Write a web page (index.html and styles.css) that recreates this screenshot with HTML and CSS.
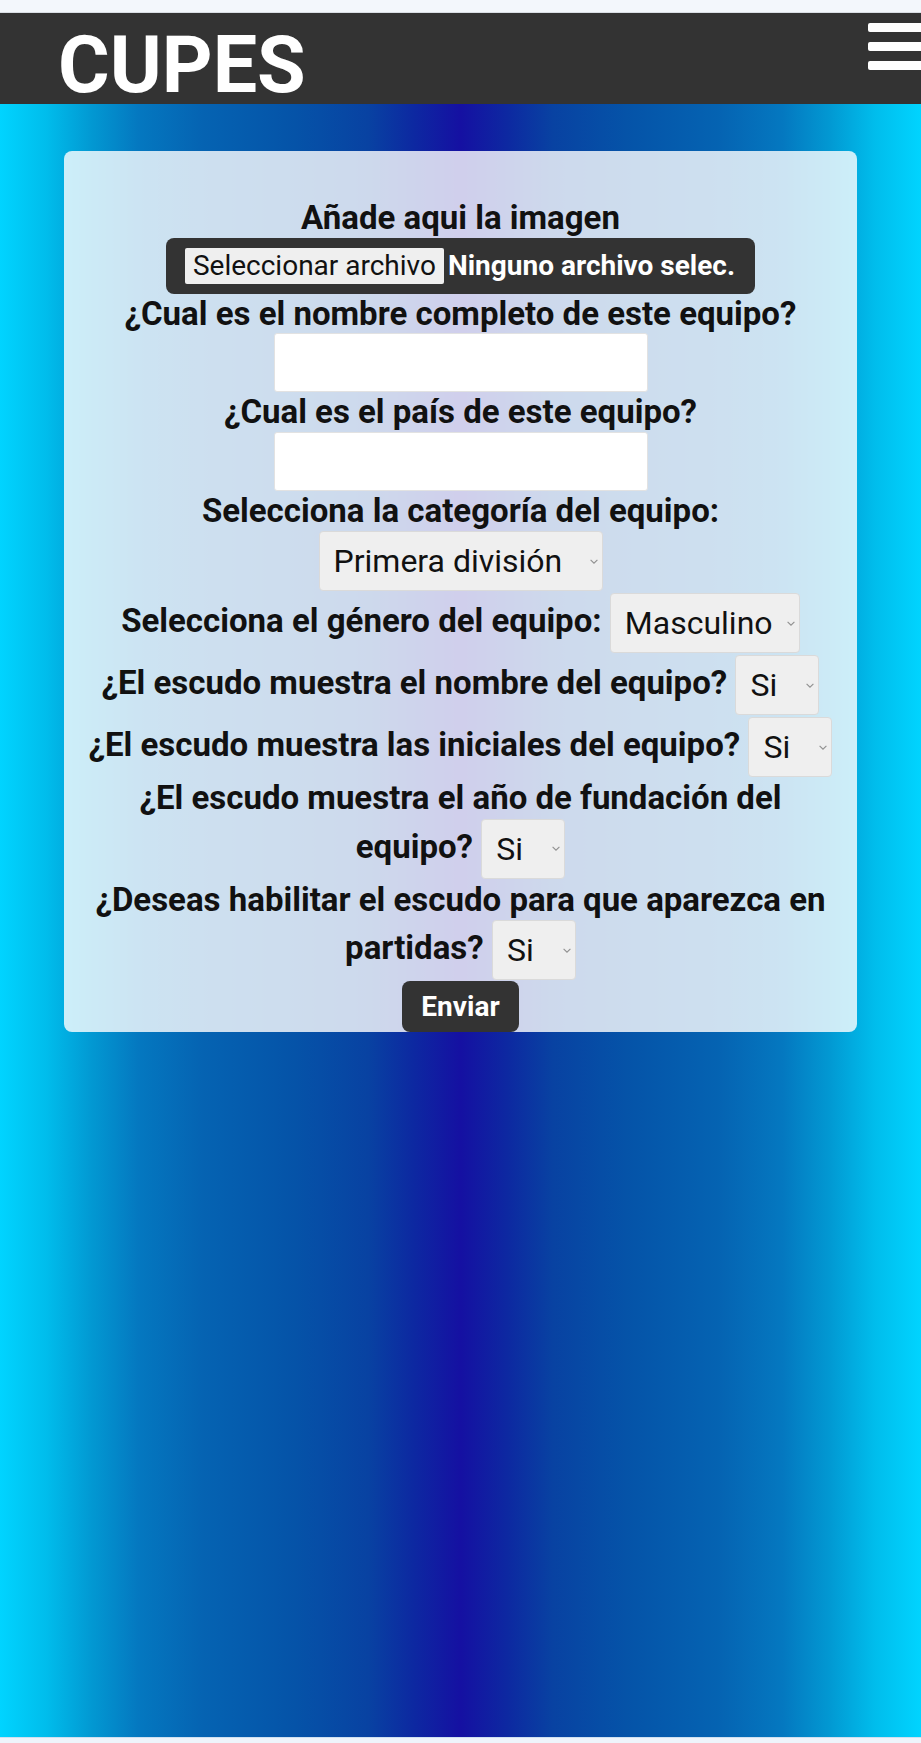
FILE: index.html
```html
<!DOCTYPE html>
<html lang="es">
<head>
<meta charset="utf-8">
<title>CUPES</title>
<link rel="stylesheet" href="styles.css">
</head>
<body>
<div class="statusbar"></div>
<header class="topbar">
  <h1 class="brand">CUPES</h1>
  <div class="burger" aria-label="Menú">
    <span class="burger-bar"></span>
    <span class="burger-bar"></span>
    <span class="burger-bar"></span>
  </div>
</header>
<main class="stage">
  <form class="card">
    <p class="q">Añade aqui la imagen</p>
    <label class="file">
      <input type="file" class="file-input" accept="image/*">
      <span class="file-btn">Seleccionar archivo</span>
      <span class="file-name">Ninguno archivo selec.</span>
    </label>
    <p class="q">¿Cual es el nombre completo de este equipo?</p>
    <input type="text" class="text-input">
    <p class="q">¿Cual es el país de este equipo?</p>
    <input type="text" class="text-input">
    <p class="q">Selecciona la categoría del equipo:</p>
    <p class="q"><select class="pick"><option>Primera división</option><option>Segunda división</option><option>Tercera división</option></select></p>
    <p class="q">Selecciona el género del equipo: <select class="pick"><option>Masculino</option><option>Femenino</option></select></p>
    <p class="q">¿El escudo muestra el nombre del equipo? <select class="pick"><option>Si</option><option>No</option></select></p>
    <p class="q">¿El escudo muestra las iniciales del equipo? <select class="pick"><option>Si</option><option>No</option></select></p>
    <p class="q">¿El escudo muestra el año de fundación del equipo? <select class="pick"><option>Si</option><option>No</option></select></p>
    <p class="q">¿Deseas habilitar el escudo para que aparezca en partidas? <select class="pick"><option>Si</option><option>No</option></select></p>
    <button type="submit" class="send">Enviar</button>
  </form>
</main>
<div class="navbar"></div>
</body>
</html>
```
FILE: styles.css
```css
* { box-sizing: border-box; }

html, body {
  margin: 0;
  padding: 0;
}

body {
  background: #f3f7fc;
  font-family: "Roboto", "Liberation Sans", sans-serif;
  color: #111;
}

.statusbar {
  height: 13px;
  background: #f3f7fc;
  border-bottom: 1px solid #d9dee4;
}

.topbar {
  height: 91px;
  background: #333333;
  display: flex;
  align-items: flex-start;
  padding-left: 58px;
}

.brand {
  margin: 14px 0 0;
  font-size: 79px;
  line-height: 76px;
  font-weight: 700;
  color: #ffffff;
}

.burger {
  margin-left: auto;
  margin-top: 10px;
  width: 53px;
  display: flex;
  flex-direction: column;
  gap: 10px;
}

.burger-bar {
  display: block;
  height: 9px;
  background: #ffffff;
  border-radius: 2px 0 0 2px;
}

.stage {
  height: 1633px;
  padding-top: 47px;
  background: linear-gradient(90deg,
    #00d4ff 0%,
    #00bdec 5%,
    #0298d2 10%,
    #0478c0 15%,
    #0563b2 22%,
    #0553a8 32%,
    #0842a2 40%,
    #0d28a1 45%,
    #1510a2 50%,
    #0d28a1 55%,
    #0842a2 60%,
    #0553a8 68%,
    #0563b2 78%,
    #0478c0 85%,
    #0298d2 90%,
    #00bdec 95%,
    #00d4ff 100%);
}

.card {
  margin: 0 64px;
  padding: 47px 20px 0;
  background: rgba(255, 255, 255, 0.8);
  border-radius: 8px;
  display: flex;
  flex-direction: column;
  align-items: center;
}

.q {
  align-self: stretch;
  margin: 0;
  text-align: center;
  font-size: 33px;
  line-height: 39.5px;
  font-weight: 700;
  color: #111;
}

.file {
  display: inline-flex;
  align-items: center;
  gap: 4px;
  height: 56px;
  padding: 0 20px 0 19px;
  background: #333333;
  border-radius: 8px;
  cursor: pointer;
}

.file-input {
  display: none;
}

.file-btn {
  height: 36px;
  padding: 0 8px;
  background: #efefef;
  border-radius: 2px;
  font-size: 28px;
  line-height: 36px;
  font-weight: 400;
  color: #111;
}

.file-name {
  font-size: 28px;
  font-weight: 700;
  color: #ffffff;
}

.text-input {
  width: 374px;
  height: 59px;
  background: #ffffff;
  border: 1px solid #e2e2e2;
  border-radius: 3px;
  font-size: 28px;
  font-family: inherit;
}

.pick {
  -webkit-appearance: none;
  appearance: none;
  height: 60px;
  margin: 1px 0;
  padding: 0 26px 0 14px;
  vertical-align: middle;
  background-color: #efefef;
  background-image: url("data:image/svg+xml;utf8,<svg xmlns='http://www.w3.org/2000/svg' width='8' height='5' viewBox='0 0 8 5'><path d='M0.6 0.8L4 4.2L7.4 0.8' fill='none' stroke='%23909090' stroke-width='1.1'/></svg>");
  background-repeat: no-repeat;
  background-position: right 4px center;
  background-size: 8px 5px;
  border: 1px solid #dadada;
  border-radius: 4px;
  font-family: "Roboto", "Liberation Sans", sans-serif;
  font-size: 32px;
  font-weight: 400;
  color: #111;
}

.send {
  height: 51px;
  padding: 0 19px;
  background: #333333;
  color: #ffffff;
  border: none;
  border-radius: 8px;
  font-family: "Roboto", "Liberation Sans", sans-serif;
  font-size: 28px;
  font-weight: 700;
}

.navbar {
  height: 6px;
  background: #eef4fb;
  border-top: 1px solid #cfe0f0;
}
```
